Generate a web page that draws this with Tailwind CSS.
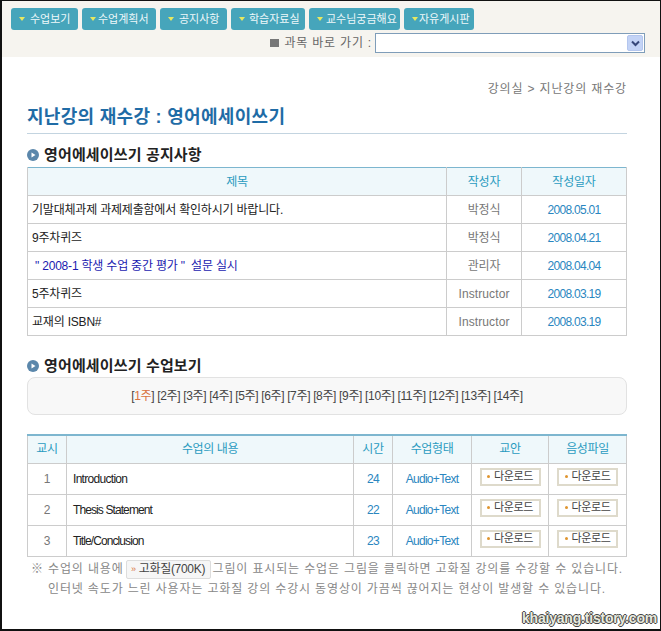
<!DOCTYPE html>
<html lang="ko"><head><meta charset="utf-8"><script src="https://cdn.jsdelivr.net/npm/@tailwindcss/browser@4"></script></head>
<body class="bg-black">
<div class="w-[661px] h-[631px] overflow-hidden pl-[2px] pr-[1px] pt-[1px] pb-[2px] bg-[#111] font-['Liberation_Sans','Noto_Sans_CJK_KR',sans-serif]">
<div class="relative h-[628px] bg-white">
 <header class="h-[56px] bg-[#f6f4ef]">
  <nav class="flex gap-[4px] pl-[9px] pt-[7px] text-[11px] text-[#eef8fa]">
   <a class="flex h-[22px] w-[67px] items-center gap-[5px] rounded-[3px] bg-[#46a5bb] pl-[8px]"><i class="h-0 w-0 border-x-[3px] border-t-[4px] border-x-transparent border-t-[#e8e860]"></i>수업보기</a>
   <a class="flex h-[22px] w-[74px] items-center gap-[2px] rounded-[3px] bg-[#46a5bb] pl-[8px]"><i class="h-0 w-0 border-x-[3px] border-t-[4px] border-x-transparent border-t-[#e8e860]"></i>수업계획서</a>
   <a class="flex h-[22px] w-[67px] items-center gap-[5px] rounded-[3px] bg-[#46a5bb] pl-[8px]"><i class="h-0 w-0 border-x-[3px] border-t-[4px] border-x-transparent border-t-[#e8e860]"></i>공지사항</a>
   <a class="flex h-[22px] w-[74px] items-center gap-[4px] rounded-[3px] bg-[#46a5bb] pl-[8px]"><i class="h-0 w-0 border-x-[3px] border-t-[4px] border-x-transparent border-t-[#e8e860]"></i>학습자료실</a>
   <a class="flex h-[22px] w-[91px] items-center gap-[3px] rounded-[3px] bg-[#46a5bb] pl-[8px]"><i class="h-0 w-0 border-x-[3px] border-t-[4px] border-x-transparent border-t-[#e8e860]"></i>교수님궁금해요</a>
   <a class="flex h-[22px] w-[70px] items-center gap-[1px] rounded-[3px] bg-[#46a5bb] pl-[8px]"><i class="h-0 w-0 border-x-[3px] border-t-[4px] border-x-transparent border-t-[#e8e860]"></i>자유게시판</a>
  </nav>
  <div class="mt-[3px] flex h-[20px] items-center justify-end pr-[15px] text-[12px] text-[#666]">
   <i class="mr-[5px] h-[8px] w-[9px] bg-[#777]"></i><span class="tracking-[0.8px]">과목 바로 가기 :</span>
   <div class="ml-[3px] flex h-[20px] w-[270px] justify-end border border-[#7f9db9] bg-white p-px">
    <div class="flex w-[16px] items-center justify-center rounded-[2px] border border-[#b4c6ee] bg-[#c3d3f6]"><svg width="9" height="7" viewBox="0 0 9 7"><path d="M1 1.5l3.5 3.5L8 1.500" fill="none" stroke="#36477a" stroke-width="2"/></svg></div>
   </div>
  </div>
 </header>
 <main class="pl-[25px] pr-[33px]">
  <p class="pt-[24px] text-right text-[12px] leading-[16px] text-[#777] tracking-[0.85px]">강의실 &gt; 지난강의 재수강</p>
  <h1 class="mt-[8px] h-[29px] border-b border-[#c3d4e0] text-[18px] leading-[24px] font-bold tracking-[0.3px] text-[#1f6ca6]">지난강의 재수강 : 영어에세이쓰기</h1>
  <h2 class="mt-[10px] flex h-[22px] items-center gap-[5px] text-[15px] font-bold tracking-[0.15px] text-[#222]"><svg width="12" height="12" viewBox="0 0 12 12"><circle cx="6" cy="6" r="6" fill="#5b87ab"/><path d="M4.500 3.500L8.500 6l-4 2.500z" fill="#fff"/></svg>영어에세이쓰기 공지사항</h2>

  <table class="mt-[1px] w-[600px] table-fixed border-collapse border-t border-t-[#7db6cf] text-[12px] tracking-[-0.2px]">
   <colgroup><col class="w-[419px]"><col class="w-[75px]"><col></colgroup>
   <thead><tr class="h-[28px] bg-[#eff8fb] text-[#2a9bc0] font-normal">
    <th class="border border-[#ccc] border-t-0 font-normal">제목</th><th class="border border-[#ccc] border-t-0 font-normal">작성자</th><th class="border border-[#ccc] border-t-0 font-normal">작성일자</th></tr></thead>
   <tbody>
    <tr class="h-[28px]"><td class="border border-[#ccc] pl-[4px] text-[#222]">기말대체과제 과제제출함에서 확인하시기 바랍니다.</td><td class="border border-[#ccc] text-center text-[#777]">박정식</td><td class="border border-[#ccc] text-center tracking-[-0.7px] text-[#2a86c0]">2008.05.01</td></tr>
    <tr class="h-[28px]"><td class="border border-[#ccc] pl-[4px] text-[#222]">9주차퀴즈</td><td class="border border-[#ccc] text-center text-[#777]">박정식</td><td class="border border-[#ccc] text-center tracking-[-0.7px] text-[#2a86c0]">2008.04.21</td></tr>
    <tr class="h-[28px]"><td class="border border-[#ccc] pl-[7px] text-[#1a1ab0]">" 2008-1 학생 수업 중간 평가 "&nbsp; 설문 실시</td><td class="border border-[#ccc] text-center text-[#777]">관리자</td><td class="border border-[#ccc] text-center tracking-[-0.7px] text-[#2a86c0]">2008.04.04</td></tr>
    <tr class="h-[28px]"><td class="border border-[#ccc] pl-[4px] text-[#222]">5주차퀴즈</td><td class="border border-[#ccc] text-center tracking-[0.1px] text-[#777]">Instructor</td><td class="border border-[#ccc] text-center tracking-[-0.7px] text-[#2a86c0]">2008.03.19</td></tr>
    <tr class="h-[28px]"><td class="border border-[#ccc] pl-[4px] text-[#222]">교재의 ISBN#</td><td class="border border-[#ccc] text-center tracking-[0.1px] text-[#777]">Instructor</td><td class="border border-[#ccc] text-center tracking-[-0.7px] text-[#2a86c0]">2008.03.19</td></tr>
   </tbody>
  </table>

  <h2 class="mt-[20px] flex h-[20px] items-center gap-[5px] text-[15px] font-bold tracking-[0.15px] text-[#222]"><svg width="12" height="12" viewBox="0 0 12 12"><circle cx="6" cy="6" r="6" fill="#5b87ab"/><path d="M4.500 3.500L8.500 6l-4 2.500z" fill="#fff"/></svg>영어에세이쓰기 수업보기</h2>
  <div class="mt-[1px] flex h-[38px] w-[600px] items-center justify-center gap-[3px] rounded-[8px] border border-[#e2e2e2] bg-[#f8f8f8] text-[12px] tracking-[-0.35px] text-[#444]">
   <span>[<span class="text-[#d9733f]">1주</span>]</span><span>[2주]</span><span>[3주]</span><span>[4주]</span><span>[5주]</span><span>[6주]</span><span>[7주]</span><span>[8주]</span><span>[9주]</span><span>[10주]</span><span>[11주]</span><span>[12주]</span><span>[13주]</span><span>[14주]</span>
  </div>

  <table class="mt-[19px] w-[600px] table-fixed border-collapse border-t-2 border-t-[#7db6cf] text-[12px] tracking-[-0.4px]">
   <colgroup><col class="w-[39px]"><col class="w-[287px]"><col class="w-[39px]"><col class="w-[79px]"><col class="w-[77px]"><col></colgroup>
   <thead><tr class="h-[28px] bg-[#eff8fb] text-[#2a9bc0]">
    <th class="border border-[#ccc] border-t-0 font-normal">교시</th><th class="border border-[#ccc] border-t-0 font-normal">수업의 내용</th><th class="border border-[#ccc] border-t-0 font-normal">시간</th><th class="border border-[#ccc] border-t-0 font-normal">수업형태</th><th class="border border-[#ccc] border-t-0 font-normal">교안</th><th class="border border-[#ccc] border-t-0 font-normal">음성파일</th></tr></thead>
   <tbody>
    <tr class="h-[31px]"><td class="border border-[#ccc] text-center text-[#777]">1</td><td class="border border-[#ccc] pl-[6px] tracking-[-0.7px] text-[#222]">Introduction</td><td class="border border-[#ccc] text-center tracking-[-0.7px] text-[#2a86c0]">24</td><td class="border border-[#ccc] text-center tracking-[-0.7px] text-[#2a86c0]">Audio+Text</td>
     <td class="border border-[#ccc] pb-[4px]"><span class="mx-auto flex h-[18px] w-[61px] items-center justify-center gap-[4px] border-2 border-[#dedacb] text-[11px] text-[#444]"><i class="h-[3px] w-[3px] rounded-full bg-[#e0952f]"></i>다운로드</span></td>
     <td class="border border-[#ccc] pb-[4px]"><span class="mx-auto flex h-[18px] w-[61px] items-center justify-center gap-[4px] border-2 border-[#dedacb] text-[11px] text-[#444]"><i class="h-[3px] w-[3px] rounded-full bg-[#e0952f]"></i>다운로드</span></td></tr>
    <tr class="h-[31px]"><td class="border border-[#ccc] text-center text-[#777]">2</td><td class="border border-[#ccc] pl-[6px] tracking-[-0.9px] text-[#222]">Thesis Statement</td><td class="border border-[#ccc] text-center tracking-[-0.7px] text-[#2a86c0]">22</td><td class="border border-[#ccc] text-center tracking-[-0.7px] text-[#2a86c0]">Audio+Text</td>
     <td class="border border-[#ccc] pb-[4px]"><span class="mx-auto flex h-[18px] w-[61px] items-center justify-center gap-[4px] border-2 border-[#dedacb] text-[11px] text-[#444]"><i class="h-[3px] w-[3px] rounded-full bg-[#e0952f]"></i>다운로드</span></td>
     <td class="border border-[#ccc] pb-[4px]"><span class="mx-auto flex h-[18px] w-[61px] items-center justify-center gap-[4px] border-2 border-[#dedacb] text-[11px] text-[#444]"><i class="h-[3px] w-[3px] rounded-full bg-[#e0952f]"></i>다운로드</span></td></tr>
    <tr class="h-[31px]"><td class="border border-[#ccc] text-center text-[#777]">3</td><td class="border border-[#ccc] pl-[6px] tracking-[-0.9px] text-[#222]">Title/Conclusion</td><td class="border border-[#ccc] text-center tracking-[-0.7px] text-[#2a86c0]">23</td><td class="border border-[#ccc] text-center tracking-[-0.7px] text-[#2a86c0]">Audio+Text</td>
     <td class="border border-[#ccc] pb-[4px]"><span class="mx-auto flex h-[18px] w-[61px] items-center justify-center gap-[4px] border-2 border-[#dedacb] text-[11px] text-[#444]"><i class="h-[3px] w-[3px] rounded-full bg-[#e0952f]"></i>다운로드</span></td>
     <td class="border border-[#ccc] pb-[4px]"><span class="mx-auto flex h-[18px] w-[61px] items-center justify-center gap-[4px] border-2 border-[#dedacb] text-[11px] text-[#444]"><i class="h-[3px] w-[3px] rounded-full bg-[#e0952f]"></i>다운로드</span></td></tr>
   </tbody>
  </table>
  <div class="mt-[3px] w-[600px] text-center text-[12px] leading-[19px] tracking-[0.85px] text-[#888]">
   <p class="flex h-[20px] items-center justify-center whitespace-nowrap">※ 수업의 내용에<span class="mx-[2px] inline-flex h-[19px] w-[85px] items-center justify-center gap-[3px] rounded-[2px] border border-[#ddd] bg-[#f6f6f6] tracking-[-0.3px] text-[#444]"><span class="text-[9px] text-[#d9733f]">»</span>고화질(700K)</span>그림이 표시되는 수업은 그림을 클릭하면 고화질 강의를 수강할 수 있습니다.</p>
   <p class="whitespace-nowrap">인터넷 속도가 느린 사용자는 고화질 강의 수강시 동영상이 가끔씩 끊어지는 현상이 발생할 수 있습니다.</p>
  </div>
 </main>
 <div class="absolute right-[3px] bottom-[1px] text-[14px] leading-[20px] font-bold tracking-[-0.2px] text-[#e8eadf] [text-shadow:1px_0_0_#444,-1px_0_0_#444,0_1px_0_#444,0_-1px_0_#444]">khaiyang.tistory.com</div>
</div>
</div>
</body></html>
